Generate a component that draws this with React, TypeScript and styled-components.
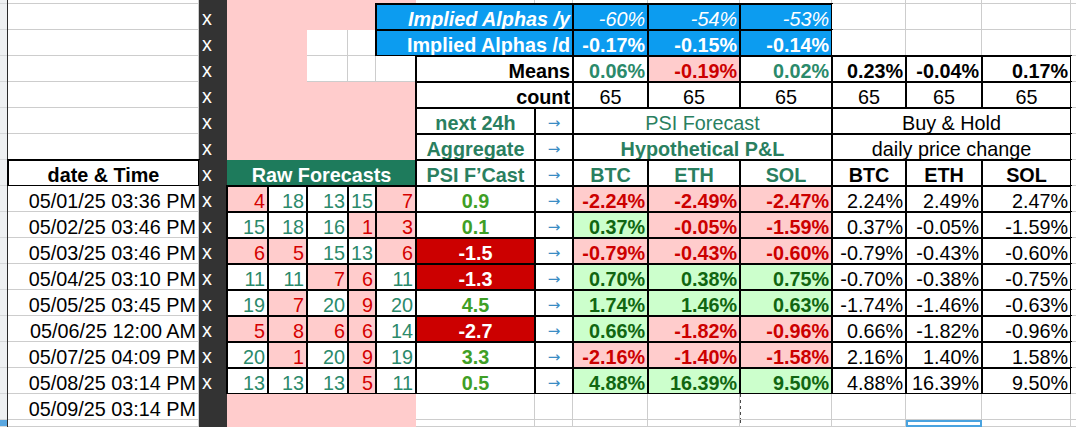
import React from 'react';
import styled, { createGlobalStyle, css } from 'styled-components';

const Global = createGlobalStyle`
  html, body { margin: 0; padding: 0; background: #fff; overflow: hidden; }
  body { font-family: "Liberation Sans", Arial, sans-serif; }
`;

const COLS = [8, 191, 28, 41, 39, 41, 28, 40, 119, 38, 75, 92, 92, 74, 76, 89];

type Tone =
  | 'plain'
  | 'fill'
  | 'blue'
  | 'band'
  | 'rawLow'
  | 'rawHigh'
  | 'psiUp'
  | 'psiDown'
  | 'loss'
  | 'gain'
  | 'teal';

const TONES: Record<Tone, { bg: string; fg: string }> = {
  plain: { bg: '#ffffff', fg: '#000000' },
  fill: { bg: '#ffcccc', fg: '#000000' },
  blue: { bg: '#0c9cf0', fg: '#ffffff' },
  band: { bg: '#1e7b5c', fg: '#ffffff' },
  rawLow: { bg: '#ffcccc', fg: '#d40000' },
  rawHigh: { bg: '#ffffff', fg: '#2b8a6b' },
  psiUp: { bg: '#ffffff', fg: '#3f9f26' },
  psiDown: { bg: '#cc0000', fg: '#ffffff' },
  loss: { bg: '#ffcccc', fg: '#cc0000' },
  gain: { bg: '#ccffcc', fg: '#116611' },
  teal: { bg: '#ffffff', fg: '#2a7f60' },
};

type Align = 'left' | 'center' | 'right';

const Sheet = styled.div`
  display: grid;
  grid-template-columns: ${COLS.map((c) => `${c}px`).join(' ')} 1fr;
  grid-template-rows: 4px repeat(16, 26px) 1fr;
  width: 1076px;
  height: 427px;
  overflow: hidden;
  font-size: 19.8px;
  line-height: 22px;
  color: #000;
`;

const RowHead = styled.div<{ $active?: boolean }>`
  background: ${(p) => (p.$active ? '#5aa7e0' : '#eef0f2')};
  box-shadow: inset -1px 0 0 #2a2a2a, inset 0 -1px 0 #d6d8da;
`;

const Rail = styled.div`
  background: #333333;
  color: #ffffff;
  display: flex;
  align-items: flex-end;
  padding: 0 0 1px 3px;
`;

const Cell = styled.div<{
  $span?: number;
  $align?: Align;
  $tone?: Tone;
  $boxed?: boolean;
  $bold?: boolean;
  $italic?: boolean;
  $pageBreak?: boolean;
  $selected?: boolean;
}>`
  grid-column: span ${(p) => p.$span ?? 1};
  display: flex;
  align-items: flex-end;
  justify-content: ${(p) =>
    p.$align === 'right' ? 'flex-end' : p.$align === 'center' ? 'center' : 'flex-start'};
  padding: 0 3px 0 3px;
  white-space: nowrap;
  min-width: 0;
  background: ${(p) => TONES[p.$tone ?? 'plain'].bg};
  color: ${(p) => TONES[p.$tone ?? 'plain'].fg};
  font-weight: ${(p) => (p.$bold ? 700 : 400)};
  font-style: ${(p) => (p.$italic ? 'italic' : 'normal')};
  ${(p) =>
    p.$boxed
      ? css`
          box-shadow: inset 0 0 0 1px #000;
          outline: 1px solid #000;
        `
      : (p.$tone ?? 'plain') === 'plain'
      ? css`
          box-shadow: inset -1px -1px 0 #cdcdcd;
        `
      : ''}
  ${(p) =>
    p.$pageBreak &&
    css`
      background-image: repeating-linear-gradient(
        to bottom,
        #4a4a4a 0 3px,
        transparent 3px 6px
      );
      background-size: 1px 100%;
      background-repeat: no-repeat;
    `}
  ${(p) =>
    p.$selected &&
    css`
      box-shadow: inset 0 0 0 2px #4aa3df;
    `}
`;

const Arrow = styled(Cell)`
  font-family: "DejaVu Sans", "Liberation Sans", sans-serif;
  font-size: 15px;
  line-height: 16px;
  color: #3a8cc4;
  padding-bottom: 3px;
`;

type DataRow = {
  date: string;
  raw: number[];
  psi: number;
  pnl: string[];
  bh: string[];
};

const ROWS: DataRow[] = [
  { date: '05/01/25 03:36 PM', raw: [4, 18, 13, 15, 7], psi: 0.9, pnl: ['-2.24%', '-2.49%', '-2.47%'], bh: ['2.24%', '2.49%', '2.47%'] },
  { date: '05/02/25 03:46 PM', raw: [15, 18, 16, 1, 3], psi: 0.1, pnl: ['0.37%', '-0.05%', '-1.59%'], bh: ['0.37%', '-0.05%', '-1.59%'] },
  { date: '05/03/25 03:46 PM', raw: [6, 5, 15, 13, 6], psi: -1.5, pnl: ['-0.79%', '-0.43%', '-0.60%'], bh: ['-0.79%', '-0.43%', '-0.60%'] },
  { date: '05/04/25 03:10 PM', raw: [11, 11, 7, 6, 11], psi: -1.3, pnl: ['0.70%', '0.38%', '0.75%'], bh: ['-0.70%', '-0.38%', '-0.75%'] },
  { date: '05/05/25 03:45 PM', raw: [19, 7, 20, 9, 20], psi: 4.5, pnl: ['1.74%', '1.46%', '0.63%'], bh: ['-1.74%', '-1.46%', '-0.63%'] },
  { date: '05/06/25 12:00 AM', raw: [5, 8, 6, 6, 14], psi: -2.7, pnl: ['0.66%', '-1.82%', '-0.96%'], bh: ['0.66%', '-1.82%', '-0.96%'] },
  { date: '05/07/25 04:09 PM', raw: [20, 1, 20, 9, 19], psi: 3.3, pnl: ['-2.16%', '-1.40%', '-1.58%'], bh: ['2.16%', '1.40%', '1.58%'] },
  { date: '05/08/25 03:14 PM', raw: [13, 13, 13, 5, 11], psi: 0.5, pnl: ['4.88%', '16.39%', '9.50%'], bh: ['4.88%', '16.39%', '9.50%'] },
];

const COINS = ['BTC', 'ETH', 'SOL'];

const Blank = ({ n }: { n: number }) => (
  <>
    {Array.from({ length: n }, (_, i) => (
      <Cell key={i} />
    ))}
  </>
);

export default function App() {
  return (
    <>
      <Global />
      <Sheet>
        {/* row 0 (partial) */}
        <RowHead />
        <Cell />
        <Rail />
        <Cell $tone="fill" $span={5} />
        <Blank n={9} />

        {/* row 1 */}
        <RowHead />
        <Cell />
        <Rail>x</Rail>
        <Cell $tone="fill" $span={4} />
        <Cell $tone="blue" $span={3} $align="right" $bold $italic $boxed>
          Implied Alphas /y
        </Cell>
        {['-60%', '-54%', '-53%'].map((v) => (
          <Cell key={v} $tone="blue" $align="right" $italic $boxed>
            {v}
          </Cell>
        ))}
        <Blank n={4} />

        {/* row 2 */}
        <RowHead />
        <Cell />
        <Rail>x</Rail>
        <Cell $tone="fill" $span={2} />
        <Blank n={2} />
        <Cell $tone="blue" $span={3} $align="right" $bold $boxed>
          Implied Alphas /d
        </Cell>
        {['-0.17%', '-0.15%', '-0.14%'].map((v) => (
          <Cell key={v} $tone="blue" $align="right" $bold $boxed>
            {v}
          </Cell>
        ))}
        <Blank n={4} />

        {/* row 3 */}
        <RowHead />
        <Cell />
        <Rail>x</Rail>
        <Cell $tone="fill" $span={2} />
        <Blank n={3} />
        <Cell $span={2} $align="right" $bold $boxed>
          Means
        </Cell>
        <Cell $tone="rawHigh" $align="right" $bold $boxed>
          0.06%
        </Cell>
        <Cell $tone="loss" $align="right" $bold $boxed>
          -0.19%
        </Cell>
        <Cell $tone="rawHigh" $align="right" $bold $boxed>
          0.02%
        </Cell>
        {['0.23%', '-0.04%', '0.17%'].map((v) => (
          <Cell key={v} $align="right" $bold $boxed>
            {v}
          </Cell>
        ))}
        <Cell />

        {/* row 4 */}
        <RowHead />
        <Cell />
        <Rail>x</Rail>
        <Cell $tone="fill" $span={5} />
        <Cell $span={2} $align="right" $bold $boxed>
          count
        </Cell>
        {Array.from({ length: 6 }, (_, i) => (
          <Cell key={i} $align="center" $boxed>
            65
          </Cell>
        ))}
        <Cell />

        {/* row 5 */}
        <RowHead />
        <Cell />
        <Rail>x</Rail>
        <Cell $tone="fill" $span={5} />
        <Cell $tone="teal" $align="center" $bold $boxed>
          next 24h
        </Cell>
        <Arrow $align="center" $boxed>→</Arrow>
        <Cell $tone="teal" $span={3} $align="center" $boxed>
          PSI Forecast
        </Cell>
        <Cell $span={3} $align="center" $boxed>
          Buy &amp; Hold
        </Cell>
        <Cell />

        {/* row 6 */}
        <RowHead />
        <Cell />
        <Rail>x</Rail>
        <Cell $tone="fill" $span={5} />
        <Cell $tone="teal" $align="center" $bold $boxed>
          Aggregate
        </Cell>
        <Arrow $align="center" $boxed>→</Arrow>
        <Cell $tone="teal" $span={3} $align="center" $bold $boxed>
          Hypothetical P&amp;L
        </Cell>
        <Cell $span={3} $align="center" $boxed>
          daily price change
        </Cell>
        <Cell />

        {/* row 7 header */}
        <RowHead />
        <Cell $align="center" $bold $boxed>
          date &amp; Time
        </Cell>
        <Rail>x</Rail>
        <Cell $tone="band" $span={5} $align="center" $bold>
          Raw Forecasts
        </Cell>
        <Cell $tone="teal" $align="center" $bold $boxed>
          PSI F’Cast
        </Cell>
        <Arrow $align="center" $boxed>→</Arrow>
        {COINS.map((c) => (
          <Cell key={`p${c}`} $tone="teal" $align="center" $bold $boxed>
            {c}
          </Cell>
        ))}
        {COINS.map((c) => (
          <Cell key={`b${c}`} $align="center" $bold $boxed>
            {c}
          </Cell>
        ))}
        <Cell />

        {/* data rows */}
        {ROWS.map((r) => (
          <React.Fragment key={r.date}>
            <RowHead />
            <Cell $align="right">{r.date}</Cell>
            <Rail>x</Rail>
            {r.raw.map((n, j) => (
              <Cell key={j} $tone={n <= 10 ? 'rawLow' : 'rawHigh'} $align="right" $boxed>
                {n}
              </Cell>
            ))}
            <Cell $tone={r.psi < 0 ? 'psiDown' : 'psiUp'} $align="center" $bold $boxed>
              {r.psi.toFixed(1)}
            </Cell>
            <Arrow $align="center" $boxed>→</Arrow>
            {r.pnl.map((v, j) => (
              <Cell key={`p${j}`} $tone={v.startsWith('-') ? 'loss' : 'gain'} $align="right" $bold $boxed>
                {v}
              </Cell>
            ))}
            {r.bh.map((v, j) => (
              <Cell key={`b${j}`} $align="right" $boxed>
                {v}
              </Cell>
            ))}
            <Cell />
          </React.Fragment>
        ))}

        {/* row 16 */}
        <RowHead />
        <Cell $align="right">05/09/25 03:14 PM</Cell>
        <Rail />
        <Cell $tone="fill" $span={5} />
        <Blank n={4} />
        <Cell $pageBreak />
        <Blank n={4} />

        {/* row 17 (partial) */}
        <RowHead $active />
        <Cell />
        <Rail />
        <Cell $tone="fill" $span={5} />
        <Blank n={4} />
        <Cell $pageBreak />
        <Cell />
        <Cell $selected />
        <Cell />
        <Cell />
      </Sheet>
    </>
  );
}
